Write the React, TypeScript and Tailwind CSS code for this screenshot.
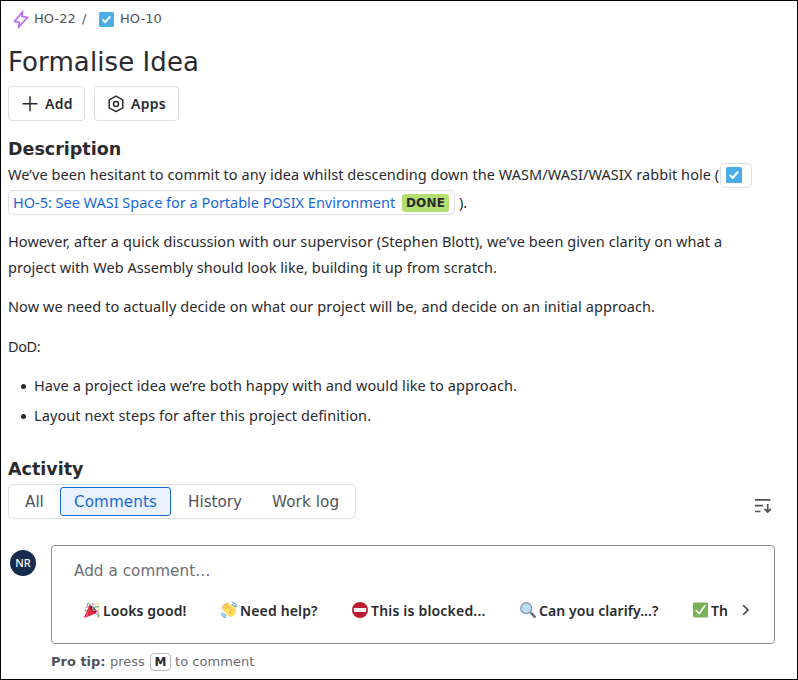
import type { ReactNode } from "react";

function TaskIcon({ size }: { size: number }) {
  return (
    <svg width={size} height={size} viewBox="0 0 16 16" className="block shrink-0">
      <rect width="16" height="16" rx="1.6" fill="#4bade8" />
      <path d="M4.4 8.600l2.400 2.300 4.800-5.600" fill="none" stroke="#fff" strokeWidth="2.1" strokeLinecap="round" strokeLinejoin="round" />
    </svg>
  );
}

function EpicIcon() {
  return (
    <svg width="17" height="19" viewBox="0 0 17 19" className="block" fill="none" stroke="#bf63f3" strokeWidth="1.6" strokeLinejoin="miter">
      <path d="M10.400 2L2.500 11.400L7.300 12.300L6.700 17L15.500 7.500L10 6.400Z" />
    </svg>
  );
}

function PartyIcon() {
  return (
    <svg width="16" height="16" viewBox="0 0 36 36">
      <path d="M11.6 7.6L.5 34c-.5 1.4.6 2 2 1.5L29 24.500C23 22 14 14 11.600 7.600z" fill="#dd2e44" />
      <path d="M12 12C8 22 5 31 2 35l7-3c0-7 1-13 3-20z" fill="#ea596e" />
      <ellipse cx="20" cy="16" rx="4" ry="11" transform="rotate(-45 20 16)" fill="#a0041e" />
      <path d="M18.600 16c0-4 3-8 1-14M4 13c4-2 5-5 3-11" fill="none" stroke="#aa8dd8" strokeWidth="2.500" />
      <path d="M19 18c4-7 9-9 15-7M10 2c3 2 4 5 3 8" fill="none" stroke="#77b255" strokeWidth="2.500" />
      <path d="M20 19c6-2 11 1 13 5M28 28c3-2 5 0 7 4" fill="none" stroke="#aa8dd8" strokeWidth="2.500" />
      <path d="M31 26c2 2 2 5 1 9" fill="none" stroke="#77b255" strokeWidth="2.500" />
      <circle cx="26" cy="5" r="2" fill="#ffcc4d" />
      <circle cx="32" cy="17" r="2" fill="#ffcc4d" />
      <circle cx="32" cy="5" r="2" fill="#ffcc4d" />
      <circle cx="4" cy="19" r="2" fill="#5c913b" />
    </svg>
  );
}

function WaveIcon() {
  return (
    <svg width="16" height="16" viewBox="0 0 36 36">
      <path d="M5 12l13 16M8.500 7l13 16M15 5l11 16" fill="none" stroke="#ef9645" strokeWidth="6" strokeLinecap="round" />
      <path d="M5 13l12 15M8.500 8l13 16M15 5l11 16M21 7l6 12" fill="none" stroke="#ffdc5d" strokeWidth="4.800" strokeLinecap="round" />
      <path d="M8 18l17-7 3 4c1-3-1-8 3-8 3 0 3 5 3 10 0 9-5 16-12 16-7 0-12-8-14-15z" fill="#ffdc5d" />
      <path d="M28 16c-6 1-9 5-7 11" fill="none" stroke="#ef9645" strokeWidth="1.300" />
      <path d="M26 1.500c4.500.5 8 4 8.500 8.500M25 6c2.500.3 4 1.500 5 4M1.500 25c.5 5.500 4 9 9.500 9.500M6 25c.5 3 2 4.500 5 5" fill="none" stroke="#5dadec" strokeWidth="2.600" strokeLinecap="round" />
    </svg>
  );
}

function NoEntryIcon() {
  return (
    <svg width="16" height="16" viewBox="0 0 36 36">
      <circle cx="18" cy="18" r="18" fill="#be1931" />
      <rect x="4" y="13.500" width="28" height="9" rx="2" fill="#fff" />
    </svg>
  );
}

function LensIcon() {
  return (
    <svg width="16" height="16" viewBox="0 0 36 36">
      <path d="M22 22l4 4" stroke="#9aaab4" strokeWidth="4" />
      <path d="M26 26l7 7" stroke="#66757f" strokeWidth="6" strokeLinecap="round" />
      <circle cx="14" cy="14" r="12.300" fill="#bbddf5" stroke="#8899a6" strokeWidth="3" />
    </svg>
  );
}

function CheckIcon() {
  return (
    <svg width="16" height="16" viewBox="0 0 36 36">
      <rect width="36" height="36" rx="4" fill="#77b255" />
      <path d="M8 19.500l6.800 7.200L28 8" fill="none" stroke="#fff" strokeWidth="4" strokeLinecap="round" strokeLinejoin="round" />
    </svg>
  );
}

function Reply({ icon, className, children }: { icon: ReactNode; className: string; children: ReactNode }) {
  return (
    <div className={"flex h-5 shrink-0 items-center gap-[3px] whitespace-nowrap font-['Noto_Sans',sans-serif] text-[14px] font-semibold text-[#292a2e] " + className}>
      {icon}
      <span>{children}</span>
    </div>
  );
}

export default function App() {
  return (
    <div className="flex h-[680px] w-[798px] flex-col overflow-hidden border border-black bg-white pl-[7px] font-['DejaVu_Sans',sans-serif] text-[#292a2e]">
      <nav className="mt-2 flex h-5 items-center whitespace-nowrap pl-1 text-[13px] tracking-[0.06px] text-[#505258]">
        <EpicIcon />
        <span className="ml-[5px]">HO-22</span>
        <span className="ml-1.5 w-[17px]">/</span>
        <TaskIcon size={15} />
        <span className="ml-1.5">HO-10</span>
      </nav>

      <h1 className="mt-[17px] h-8 whitespace-nowrap text-[26px] leading-8 tracking-[0.09px]">Formalise Idea</h1>

      <div className="mt-2 flex h-[35px] gap-[9px] font-['Noto_Sans',sans-serif] text-[14px] font-semibold">
        <button className="flex w-[77px] items-center rounded-[4px] border border-[#dddee1] pl-3 tracking-[0.3px]">
          <svg width="18" height="18" viewBox="0 0 18 18" stroke="#292a2e" strokeWidth="1.500"><path d="M1.500 8.750h15M9 1.250v15" /></svg>
          <span className="ml-1.5">Add</span>
        </button>
        <button className="flex w-[85px] items-center rounded-[4px] border border-[#dddee1] pl-3 tracking-[0.25px]">
          <svg width="18" height="18" viewBox="0 0 18 18" fill="none" stroke="#292a2e" strokeWidth="1.500" strokeLinejoin="round">
            <path d="M9 1.200l6.800 3.700v8L9 16.600l-6.800-3.700v-8z" />
            <circle cx="9" cy="8.900" r="2.500" />
          </svg>
          <span className="ml-1.5">Apps</span>
        </button>
      </div>

      <h2 className="mt-4 h-6 text-[17.5px] font-bold leading-6">Description</h2>

      <section className="whitespace-nowrap font-['Noto_Sans',sans-serif] text-[14.5px] leading-[26px]">
        <div className="flex h-[27px] items-start">
          <span className="w-[712px] tracking-[0.065px]">We’ve been hesitant to commit to any idea whilst descending down the WASM/WASI/WASIX rabbit hole (</span>
          <span className="mt-[2px] flex h-[25px] w-8 items-start rounded-[5px] border border-[#dddee1] pl-[5px] pt-[3px]"><TaskIcon size={16} /></span>
        </div>
        <div className="mt-px flex h-[26px] items-start">
          <span className="mt-px flex h-[25px] w-[447px] items-center rounded-[5px] border border-[#dddee1] pl-1 text-[#1868db]">
            <span className="w-[389px] pb-[2px] tracking-[-0.02px]">HO-5: See WASI Space for a Portable POSIX Environment</span>
            <span className="flex h-[18px] w-[47px] items-center justify-center rounded-[3px] bg-[#b3df72] font-['DejaVu_Sans',sans-serif] text-[12px] font-bold leading-none tracking-[0.15px] text-[#292a2e]">DONE</span>
          </span>
          <span className="ml-1">).</span>
        </div>
        <p className="mt-[13px] tracking-[0.08px]">
          However, after a quick discussion with our supervisor (Stephen Blott), we’ve been given clarity on what a<br />
          <span className="tracking-[0.06px]">project with Web Assembly should look like, building it up from scratch.</span>
        </p>
        <p className="mt-[13px] tracking-[0.1px]">Now we need to actually decide on what our project will be, and decide on an initial approach.</p>
        <p className="mt-[14px] tracking-[-0.4px]">DoD:</p>
        <ul className="mt-[13px] flex flex-col gap-1 pl-[13px] tracking-[0.094px]">
          <li className="flex items-center"><i className="mr-2 mt-[3px] size-[5px] rounded-full bg-[#292a2e]" />Have a project idea we’re both happy with and would like to approach.</li>
          <li className="flex items-center"><i className="mr-2 mt-[3px] size-[5px] rounded-full bg-[#292a2e]" />Layout next steps for after this project definition.</li>
        </ul>
      </section>

      <h2 className="mt-[29px] h-6 text-[17.5px] font-bold leading-6">Activity</h2>

      <div className="mt-[3px] flex h-[35px] items-start">
        <div className="flex h-[35px] w-[348px] items-center whitespace-nowrap rounded-[5px] border border-[#dddee1] text-[15.2px] text-[#505258]">
          <span className="ml-4 w-[35px] pt-0.5">All</span>
          <span className="flex h-[29px] w-[111px] items-center justify-center rounded-[3px] border border-[#1868db] bg-[#e9f2fe] pt-0.5 tracking-[0.1px] text-[#1868db]">Comments</span>
          <span className="ml-[17px] w-[84px] pt-0.5">History</span>
          <span className="pt-0.5 tracking-[0.1px]">Work log</span>
        </div>
        <svg width="18" height="16" viewBox="0 0 18 16" className="ml-[398px] mt-[14px]" fill="none" stroke="#505258" strokeWidth="1.700">
          <path d="M1 1.900h15.500M1 7.700h8M1 13.500h5.500M13.700 6v8.200M10.500 10.800l3.200 3.300 3.200-3.300" />
        </svg>
      </div>

      <div className="mt-[26px] flex h-[99px]">
        <div className="ml-[2px] mt-[5px] flex size-[26px] items-center justify-center rounded-full bg-[#172b4d] font-['Noto_Sans',sans-serif] text-[11px] font-medium text-white">NR</div>
        <div className="ml-[15px] flex w-[724px] flex-col rounded-[4px] border border-[#8c8f97]">
          <div className="ml-[22px] mt-[15px] h-5 text-[15.2px] leading-5 tracking-[0.05px] text-[#6b6e76]">Add a comment…</div>
          <div className="mt-[19px] flex items-center">
            <div className="flex w-[675px] shrink-0 overflow-hidden pl-8">
              <Reply icon={<PartyIcon />} className="w-[137px] tracking-[0.1px]">Looks good!</Reply>
              <Reply icon={<WaveIcon />} className="w-[131px] tracking-[0.15px]">Need help?</Reply>
              <Reply icon={<NoEntryIcon />} className="w-[168px] tracking-[0.19px]">This is blocked...</Reply>
              <Reply icon={<LensIcon />} className="w-[173px] tracking-[0.07px]">Can you clarify...?</Reply>
              <Reply icon={<CheckIcon />} className="w-[35px]">Th</Reply>
            </div>
            <svg width="8" height="12" viewBox="0 0 8 12" className="ml-[15px]" fill="none" stroke="#404249" strokeWidth="1.600"><path d="M1.200 1.200L6 6l-4.800 4.800" /></svg>
          </div>
        </div>
      </div>

      <div className="ml-[43px] mt-2 flex h-[19px] items-center whitespace-nowrap text-[13px] text-[#6b6e76]">
        <b className="w-[59px] text-[#505258]">Pro tip:</b>
        <span className="w-10">press</span>
        <kbd className="flex h-[18px] w-[21px] items-center justify-center rounded-[4px] border border-[#b7b9be] font-['DejaVu_Sans',sans-serif] text-[12px] font-bold leading-none text-[#292a2e]">M</kbd>
        <span className="ml-1 tracking-[0.05px]">to comment</span>
      </div>
    </div>
  );
}
